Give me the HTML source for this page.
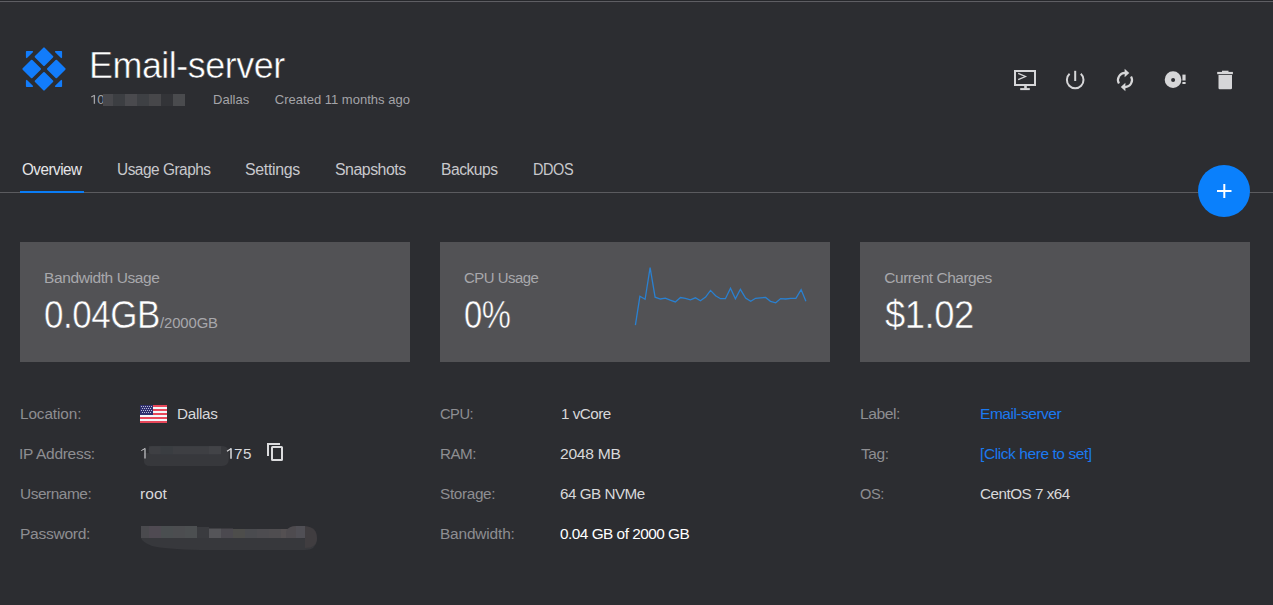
<!DOCTYPE html>
<html><head><meta charset="utf-8">
<style>
*{margin:0;padding:0;box-sizing:border-box}
html,body{width:1273px;height:605px;overflow:hidden;background:#2c2d31;font-family:"Liberation Sans",sans-serif}
.t{position:absolute;white-space:nowrap;line-height:50px;transform-origin:0 0}
.b{position:absolute}
</style></head><body>
<div class="b" style="left:0;top:0;width:1273px;height:1px;background:#26272b"></div><div class="b" style="left:0;top:1px;width:1273px;height:1px;background:#5e5e63"></div><div class="b" style="left:0;top:2px;width:1273px;height:1px;background:#2e2e33"></div>

<svg class="b" style="left:22px;top:47px" width="44" height="44" viewBox="0 0 44 44">
<g fill="#127cfb" stroke="#127cfb" stroke-width="2" stroke-linejoin="round">
<path d="M22 1.41 L30.29 9.7 L22 17.99 L13.71 9.7 Z"/>
<path d="M1.41 22 L9.7 13.71 L17.99 22 L9.7 30.29 Z"/>
<path d="M42.59 22 L34.3 13.71 L26.01 22 L34.3 30.29 Z"/>
<path d="M22 42.59 L30.29 34.3 L22 26.01 L13.71 34.3 Z"/>
</g>
<g fill="#127cfb" stroke="#127cfb" stroke-width="1.6" stroke-linejoin="round">
<path d="M4.7 4.7 L10.3 4.7 L4.7 10.3 Z"/>
<path d="M39.3 4.7 L33.7 4.7 L39.3 10.3 Z"/>
<path d="M4.7 39.3 L10.3 39.3 L4.7 33.7 Z"/>
<path d="M39.3 39.3 L33.7 39.3 L39.3 33.7 Z"/>
</g></svg>


<svg class="b" style="left:0;top:0" width="1273" height="605" viewBox="0 0 1273 605">
<!-- console -->
<g fill="none" stroke="#d6d6d8" stroke-width="2">
<rect x="1015" y="71" width="20" height="14"/>
<path d="M1075.2 70.8 V81"/>
<path d="M1069.6 73.8 A8.3 8.3 0 1 0 1080.8 73.8"/>
<path d="M1118.94 83.5 A7 7 0 0 1 1125.5 73" stroke-width="2.2"/>
<path d="M1131.06 76.5 A7 7 0 0 1 1124.5 87" stroke-width="2.2"/>
</g>
<path d="M1018.2 73.4 L1025.4 76.5 L1018.2 79.6" fill="none" stroke="#d6d6d8" stroke-width="1.35"/>
<g fill="#d6d6d8">
<rect x="1024.2" y="85" width="2.6" height="3.6"/>
<rect x="1020.2" y="88.1" width="9.6" height="2"/>
<path d="M1124.6 68.8 L1129.3 73 L1124.6 77.2 Z"/>
<path d="M1125.4 82.8 L1120.8 87 L1125.4 91.2 Z"/>
<path fill-rule="evenodd" d="M1164.7 79.7 A8.35 8.35 0 1 0 1181.4 79.7 A8.35 8.35 0 1 0 1164.7 79.7 Z M1171.1 79.9 A2 2 0 1 0 1175.1 79.9 A2 2 0 1 0 1171.1 79.9 Z"/>
<rect x="1182.4" y="74.6" width="3.2" height="5.9"/>
<rect x="1182.4" y="82" width="3.2" height="2"/>
<rect x="1217.2" y="71.9" width="15.7" height="2.3"/>
<rect x="1222" y="70.7" width="6.5" height="2"/>
<path d="M1218.5 74.9 H1232 V88 Q1232 89.2 1230.8 89.2 H1219.7 Q1218.5 89.2 1218.5 88 Z"/>
</g>
<!-- divider / underline -->
<rect x="0" y="192" width="1273" height="1" fill="#5b5b5f"/>
<rect x="20" y="191" width="64" height="2" fill="#0a7cf5"/>
<!-- fab -->
<circle cx="1224" cy="191" r="26" fill="#0a80fc"/>
<rect x="1217" y="190" width="14.5" height="2" fill="#fff"/>
<rect x="1223.3" y="184" width="2" height="14" fill="#fff"/>
<!-- cards -->
<rect x="20" y="242" width="390" height="120" fill="#525255"/>
<rect x="440" y="242" width="390" height="120" fill="#525255"/>
<rect x="860" y="242" width="390" height="120" fill="#525255"/>
<polyline points="635.4,325.1 639.9,296.3 645.1,299.3 650.1,267.7 655.1,297.2 660.4,299.0 665.3,298.1 670.2,300.2 675.3,301.9 680.5,297.5 685.4,298.3 690.4,299.8 695.4,297.8 700.4,300.8 705.6,297.1 710.5,290.4 715.6,295.7 720.5,298.7 725.4,298.7 730.5,288.3 735.4,298.7 740.4,289.3 745.6,298.0 750.7,301.3 755.6,298.3 760.5,297.8 765.6,297.5 770.5,301.3 775.7,302.8 780.7,298.6 785.7,299.0 790.7,298.3 795.9,298.3 801.1,289.6 805.9,301.3" fill="none" stroke="#2a80d0" stroke-width="1.3" stroke-linejoin="miter"/>
<!-- flag -->
<g>
<rect x="140" y="405" width="27" height="18" fill="#f2f6fa"/>
<rect x="140" y="405" width="27" height="2" fill="#e8475a"/>
<rect x="140" y="409" width="27" height="2" fill="#e8475a"/>
<rect x="140" y="413" width="27" height="2" fill="#e8475a"/>
<rect x="140" y="417" width="27" height="2" fill="#e8475a"/>
<rect x="140" y="421" width="27" height="2" fill="#e8475a"/>
<rect x="140" y="405" width="13" height="10" fill="#30306e"/>
<rect x="141" y="406" width="1" height="1" fill="#b8bad8"/><rect x="143" y="406" width="1" height="1" fill="#b8bad8"/><rect x="145" y="406" width="1" height="1" fill="#b8bad8"/><rect x="147" y="406" width="1" height="1" fill="#b8bad8"/><rect x="149" y="406" width="1" height="1" fill="#b8bad8"/><rect x="151" y="406" width="1" height="1" fill="#b8bad8"/><rect x="142" y="408" width="1" height="1" fill="#b8bad8"/><rect x="144" y="408" width="1" height="1" fill="#b8bad8"/><rect x="146" y="408" width="1" height="1" fill="#b8bad8"/><rect x="148" y="408" width="1" height="1" fill="#b8bad8"/><rect x="150" y="408" width="1" height="1" fill="#b8bad8"/><rect x="141" y="410" width="1" height="1" fill="#b8bad8"/><rect x="143" y="410" width="1" height="1" fill="#b8bad8"/><rect x="145" y="410" width="1" height="1" fill="#b8bad8"/><rect x="147" y="410" width="1" height="1" fill="#b8bad8"/><rect x="149" y="410" width="1" height="1" fill="#b8bad8"/><rect x="151" y="410" width="1" height="1" fill="#b8bad8"/><rect x="142" y="412" width="1" height="1" fill="#b8bad8"/><rect x="144" y="412" width="1" height="1" fill="#b8bad8"/><rect x="146" y="412" width="1" height="1" fill="#b8bad8"/><rect x="148" y="412" width="1" height="1" fill="#b8bad8"/><rect x="150" y="412" width="1" height="1" fill="#b8bad8"/>
</g>
<!-- ip blur -->

<path d="M148.8 446 H222 Q228.8 446 228.8 453 V459 Q228.8 466 222 466 H150 Q143.8 466 143.8 460 V453 H148.8 Z" fill="#37383c"/>
<rect x="148.8" y="446.2" width="72.3" height="8" rx="3" fill="#3e3f43"/>
<rect x="160.8" y="446.2" width="12" height="8" fill="#3a3d41"/>
<rect x="209" y="446.2" width="12" height="8" fill="#424347"/>
<path d="M145 448.4 V458.6" stroke="#c8c8cc" stroke-width="1.2"/><path d="M141.3 450.6 L145.2 448.4" stroke="#c8c8cc" stroke-width="1"/>
<path d="M231 448.6 V458.8" stroke="#dcdcde" stroke-width="1.5"/><path d="M227 451.2 L231.3 448.6" stroke="#dcdcde" stroke-width="1.2"/>
<path d="M94.4 95.2 V103.8" stroke="#a4a4a8" stroke-width="1.3"/><path d="M91.2 97 L94.6 95.2" stroke="#a4a4a8" stroke-width="1.1"/>
<!-- copy icon -->
<g fill="none" stroke="#dcdcde" stroke-width="2">
<path d="M268 456 V444 H280"/>
<rect x="272" y="447" width="10" height="13" rx="0.5"/>
</g>
<!-- password blur -->
<path d="M141 538 H300 Q317 538 317 540 Q316 550 305 550 H200 Q165 549 152 546 Q142 542 141 538 Z" fill="#37383c"/>
<rect x="141" y="526" width="8" height="12" fill="#4a4a4e"/><rect x="149" y="526" width="12" height="12" fill="#4f4a52"/><rect x="161" y="526" width="12" height="12" fill="#4a4e50"/><rect x="173" y="526" width="12" height="12" fill="#4c4d50"/><rect x="185" y="526" width="12" height="12" fill="#4c4f51"/><rect x="197" y="527" width="12" height="11" fill="#3a3b3f"/><rect x="209" y="528.5" width="12" height="9.5" fill="#555559"/><rect x="221" y="528.5" width="12" height="9.5" fill="#4b494f"/><rect x="233" y="529" width="12" height="9" fill="#4d4d4b"/><rect x="245" y="529" width="12" height="9" fill="#4a4b4f"/><rect x="257" y="529" width="12" height="9" fill="#4d4c50"/><rect x="269" y="529" width="12" height="9" fill="#4f4d50"/><rect x="281" y="529" width="12" height="9" fill="#545052"/>
<path d="M286 538 V531 Q289 526 296 526 H305 V538 Z" fill="#4e4b4f"/>
<path d="M296 526 H305 V538 H296 Z" fill="#504f55"/>
<path d="M305 526 Q317 527 317 538 Q317 548 305 548 Z" fill="#403d40"/>
</svg>

<div class="t" style="left:89.49px;top:40.8px;font-size:37px;color:#ffffff;letter-spacing:-0.5px;transform:scaleX(0.9702);-webkit-text-stroke:0.5px #2c2d31">Email-server</div>
<div class="t" style="left:213.1px;top:74.8px;font-size:13px;color:#a4a4a8;letter-spacing:0.0px">Dallas</div>
<div class="t" style="left:274.8px;top:74.8px;font-size:13px;color:#a4a4a8;letter-spacing:0.01px">Created 11 months ago</div>
<div class="t" style="left:22.05px;top:144.6px;font-size:16px;color:#e6e6e8;letter-spacing:-0.5px;transform:scaleX(0.95)">Overview</div>
<div class="t" style="left:117.04px;top:144.6px;font-size:16px;color:#c8c8cc;letter-spacing:-0.5px;transform:scaleX(0.9625)">Usage Graphs</div>
<div class="t" style="left:245.21px;top:144.6px;font-size:16px;color:#c8c8cc;letter-spacing:-0.33px;transform:scaleX(0.9944)">Settings</div>
<div class="t" style="left:334.81px;top:144.6px;font-size:16px;color:#c8c8cc;letter-spacing:-0.5px;transform:scaleX(0.9943)">Snapshots</div>
<div class="t" style="left:441.12px;top:144.6px;font-size:16px;color:#c8c8cc;letter-spacing:-0.5px;transform:scaleX(0.9772)">Backups</div>
<div class="t" style="left:532.89px;top:144.6px;font-size:16px;color:#c8c8cc;letter-spacing:-0.5px;transform:scaleX(0.907)">DDOS</div>
<div class="t" style="left:44.1px;top:252.8px;font-size:15.5px;color:#a8a8ac;letter-spacing:-0.41px">Bandwidth Usage</div>
<div class="t" style="left:464.34px;top:252.8px;font-size:15.5px;color:#a8a8ac;letter-spacing:-0.5px;transform:scaleX(0.9618)">CPU Usage</div>
<div class="t" style="left:884.3px;top:252.8px;font-size:15.5px;color:#a8a8ac;letter-spacing:-0.48px">Current Charges</div>
<div class="t" style="left:43.96px;top:289.9px;font-size:38px;color:#ffffff;letter-spacing:-0.5px;transform:scaleX(0.9213);-webkit-text-stroke:0.5px #525255">0.04GB</div>
<div class="t" style="left:160.2px;top:297.9px;font-size:15px;color:#a8a8ac;letter-spacing:-0.1px;transform:scaleX(0.9897)">/2000GB</div>
<div class="t" style="left:464.37px;top:289.9px;font-size:38px;color:#ffffff;letter-spacing:-0.5px;transform:scaleX(0.8627);-webkit-text-stroke:0.5px #525255">0%</div>
<div class="t" style="left:885.14px;top:289.9px;font-size:38px;color:#ffffff;letter-spacing:-0.5px;transform:scaleX(0.9578);-webkit-text-stroke:0.5px #525255">$1.02</div>
<div class="t" style="left:20.11px;top:388.7px;font-size:15.5px;color:#8e8e92;letter-spacing:-0.09px;transform:scaleX(0.9883)">Location:</div>
<div class="t" style="left:19.1px;top:429.0px;font-size:15.5px;color:#8e8e92;letter-spacing:-0.29px">IP Address:</div>
<div class="t" style="left:20.31px;top:468.9px;font-size:15.5px;color:#8e8e92;letter-spacing:-0.44px;transform:scaleX(0.9929)">Username:</div>
<div class="t" style="left:20.29px;top:508.9px;font-size:15.5px;color:#8e8e92;letter-spacing:-0.31px;transform:scaleX(1.0075)">Password:</div>
<div class="t" style="left:177.11px;top:388.7px;font-size:15.5px;color:#d8d8da;letter-spacing:-0.32px;transform:scaleX(0.985)">Dallas</div>
<div class="t" style="left:140.0px;top:468.9px;font-size:15.5px;color:#d8d8da;letter-spacing:0.03px;transform:scaleX(1.0038)">root</div>
<div class="t" style="left:439.95px;top:388.7px;font-size:15.5px;color:#8e8e92;letter-spacing:-0.5px;transform:scaleX(0.9455)">CPU:</div>
<div class="t" style="left:439.92px;top:429.0px;font-size:15.5px;color:#8e8e92;letter-spacing:-0.5px;transform:scaleX(0.98)">RAM:</div>
<div class="t" style="left:439.91px;top:469.0px;font-size:15.5px;color:#8e8e92;letter-spacing:-0.36px;transform:scaleX(0.9907)">Storage:</div>
<div class="t" style="left:439.91px;top:508.8px;font-size:15.5px;color:#8e8e92;letter-spacing:-0.16px;transform:scaleX(0.9945)">Bandwidth:</div>
<div class="t" style="left:560.62px;top:388.7px;font-size:15.5px;color:#d8d8da;letter-spacing:-0.5px;transform:scaleX(0.98)">1 vCore</div>
<div class="t" style="left:560.19px;top:429.0px;font-size:15.5px;color:#d8d8da;letter-spacing:-0.27px;transform:scaleX(1.0069)">2048 MB</div>
<div class="t" style="left:560.22px;top:469.0px;font-size:15.5px;color:#d8d8da;letter-spacing:-0.5px;transform:scaleX(0.9824)">64 GB NVMe</div>
<div class="t" style="left:560.21px;top:508.6px;font-size:15.5px;color:#ffffff;letter-spacing:-0.5px;transform:scaleX(0.9899)">0.04 GB of 2000 GB</div>
<div class="t" style="left:860.09px;top:388.7px;font-size:15.5px;color:#8e8e92;letter-spacing:-0.5px;transform:scaleX(1.0135)">Label:</div>
<div class="t" style="left:861.1px;top:429.0px;font-size:15.5px;color:#8e8e92;letter-spacing:-0.37px;transform:scaleX(0.9963)">Tag:</div>
<div class="t" style="left:860.16px;top:469.0px;font-size:15.5px;color:#8e8e92;letter-spacing:-0.5px;transform:scaleX(0.9435)">OS:</div>
<div class="t" style="left:980.1px;top:388.7px;font-size:15.5px;color:#1b79f0;letter-spacing:-0.5px">Email-server</div>
<div class="t" style="left:980.1px;top:429.0px;font-size:15.5px;color:#1b79f0;letter-spacing:-0.43px">[Click here to set]</div>
<div class="t" style="left:980.12px;top:469.0px;font-size:15.5px;color:#d8d8da;letter-spacing:-0.5px;transform:scaleX(0.9822)">CentOS 7 x64</div>
<div class="t" style="left:97.2px;top:74.8px;font-size:13px;color:#a4a4a8;letter-spacing:0.0px">0</div>
<div class="t" style="left:233.92px;top:429.0px;font-size:15.5px;color:#d8d8da;letter-spacing:0.5px;transform:scaleX(0.9812)">75</div><div class="b" style="left:103px;top:94px;width:10px;height:12px;background:#48484c"></div><div class="b" style="left:113px;top:94px;width:12px;height:12px;background:#3c3e42"></div><div class="b" style="left:125px;top:94px;width:12px;height:12px;background:#4a4a4e"></div><div class="b" style="left:137px;top:94px;width:12px;height:12px;background:#3e4044"></div><div class="b" style="left:149px;top:94px;width:12px;height:12px;background:#47474a"></div><div class="b" style="left:161px;top:94px;width:12px;height:12px;background:#333438"></div><div class="b" style="left:173px;top:94px;width:12px;height:12px;background:#4a4b4e"></div>
</body></html>
